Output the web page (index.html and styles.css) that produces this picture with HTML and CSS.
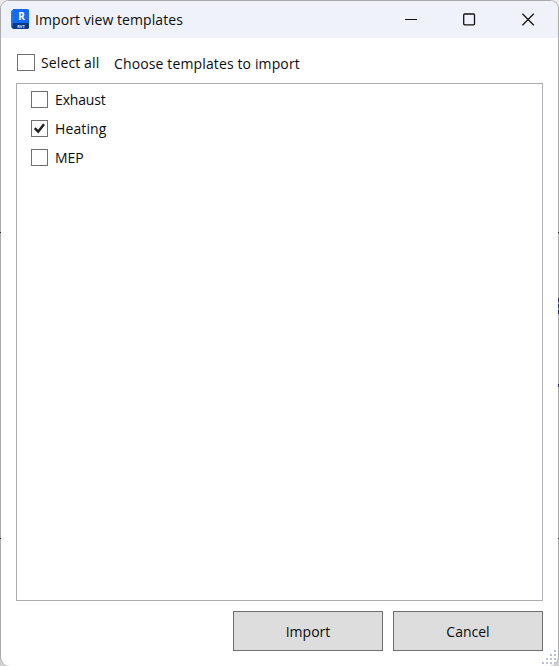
FILE: index.html
```html
<!DOCTYPE html>
<html lang="en">
<head>
<meta charset="utf-8">
<title>Import view templates</title>
<link rel="stylesheet" href="styles.css">
</head>
<body>
<div class="window">
  <header class="titlebar">
    <svg class="app-icon" width="19" height="20" viewBox="0 0 19 20">
      <path d="M0 2L3 0V18L1 19L0 18Z" fill="#1e78e8"/>
      <path d="M2 0H17L18 1V14H2Z" fill="#1468fa"/>
      <path d="M2 14H18V19L17 20H2L1 19Z" fill="#0a3a8c"/>
      <text class="icon-letter" x="10.5" y="11" text-anchor="middle">R</text>
      <text class="icon-tag" x="10" y="18.6" text-anchor="middle">RVT</text>
    </svg>
    <h1 class="title">Import view templates</h1>
    <div class="controls">
      <svg width="13" height="13" viewBox="0 0 13 13"><path d="M1 6.5H13" stroke="#111" stroke-width="1.1"/></svg>
      <svg width="13" height="13" viewBox="0 0 13 13"><rect x=".7" y="1" width="10.8" height="10.8" rx="1" fill="none" stroke="#111" stroke-width="1.3"/></svg>
      <svg width="13" height="13" viewBox="0 0 13 13"><path d="M.4 .8L11.8 12.2M11.8 .8L.4 12.2" stroke="#111" stroke-width="1.25"/></svg>
    </div>
  </header>
  <main class="content">
    <div class="toolbar">
      <label class="option select-all"><span class="box"></span><span class="label-all">Select all</span></label>
      <span class="hint">Choose templates to import</span>
    </div>
    <div class="list">
      <label class="option"><span class="box"></span><span class="label-exhaust">Exhaust</span></label>
      <label class="option"><span class="box"><svg width="15" height="15" viewBox="0 0 15 15"><path d="M2.8 7.2L6.2 10.7L12 3.2" fill="none" stroke="#212121" stroke-width="2.5"/></svg></span><span class="label-heating">Heating</span></label>
      <label class="option"><span class="box"></span><span class="label-mep">MEP</span></label>
    </div>
    <div class="actions">
      <button class="button">Import</button>
      <button class="button">Cancel</button>
    </div>
  </main>
  <svg class="grip" width="14" height="14" viewBox="0 0 14 14" fill="#bdc3d7">
    <path d="M12 0h2v2h-2zM8 4h2v2H8zM12 4h2v2h-2zM4 8h2v2H4zM8 8h2v2H8zM12 8h2v2h-2zM0 12h2v2H0zM4 12h2v2H4zM8 12h2v2H8zM12 12h2v2h-2z"/>
  </svg>
</div>
<i class="mark left upper"></i><i class="mark left lower"></i>
<i class="mark right upper"></i><i class="mark right lower"></i>
<i class="mark right blue-long"></i><i class="mark right blue-short"></i>
</body>
</html>
```
FILE: styles.css
```css
* { box-sizing: border-box; }
html, body { margin: 0; height: 100%; overflow: hidden; }
body {
  position: relative;
  background: linear-gradient(#e9e9e9 50%, #d2d2d2 50%);
  color: #0c0c0c;
  font: 14px/20px "Open Sans", "Noto Sans", sans-serif;
}
.window {
  position: relative;
  height: 666px;
  display: flex;
  flex-direction: column;
  border: 1px solid #ababad;
  border-bottom: 0;
  border-radius: 9px;
  background: #fff;
  overflow: hidden;
}
.titlebar {
  flex: 0 0 37px;
  display: flex;
  align-items: center;
  padding: 0 23px 0 10px;
  background: #f0f2f9;
}
.app-icon { display: block; margin-top: -1px; }
.icon-letter { font: bold 10px "Open Sans", sans-serif; fill: #fff; }
.icon-tag { font: bold 4px "Open Sans", sans-serif; fill: #dce8ff; }
.title { margin: 0 0 0 5px; font-size: 14px; font-weight: 400; letter-spacing: .08px; }
.controls { display: flex; gap: 46px; margin: -1px 0 0 auto; }
.controls svg { display: block; }
.content {
  flex: 1;
  display: flex;
  flex-direction: column;
  padding: 14px 15px;
}
.toolbar { display: flex; height: 31px; }
.option { display: flex; align-items: center; height: 29px; white-space: nowrap; }
.select-all { height: 21px; width: 98px; padding-left: 1px; }
.label-all { letter-spacing: .12px; }
.label-exhaust { letter-spacing: -.15px; }
.label-heating { letter-spacing: .12px; }
.hint { margin-top: 2px; letter-spacing: .13px; white-space: nowrap; }
.box {
  width: 17px;
  height: 17px;
  margin-right: 7px;
  border: 1px solid #707070;
  background: #fff;
}
.select-all .box { width: 18px; margin-right: 6px; }
.box svg { display: block; }
.list {
  height: 518px;
  padding: 1px 14px;
  border: 1px solid #abadb3;
}
.actions { display: flex; justify-content: flex-end; gap: 10px; margin-top: 10px; }
.button {
  width: 150px;
  height: 40px;
  padding: 2px 0 0;
  border: 1px solid #707070;
  border-radius: 0;
  background: #ddd;
  color: inherit;
  font: inherit;
}
.grip { position: absolute; right: 2px; bottom: 2px; }
.mark { position: absolute; width: 1px; height: 1px; background: #222; }
.left { left: 0; }
.right { right: 0; }
.upper { top: 232px; }
.lower { top: 538px; }
.blue-long { top: 298px; height: 16px; background: repeating-linear-gradient(#302b80 0 4px, #8985ad 4px 6px); }
.blue-short { top: 384px; height: 3px; background: #302b80; }
```
